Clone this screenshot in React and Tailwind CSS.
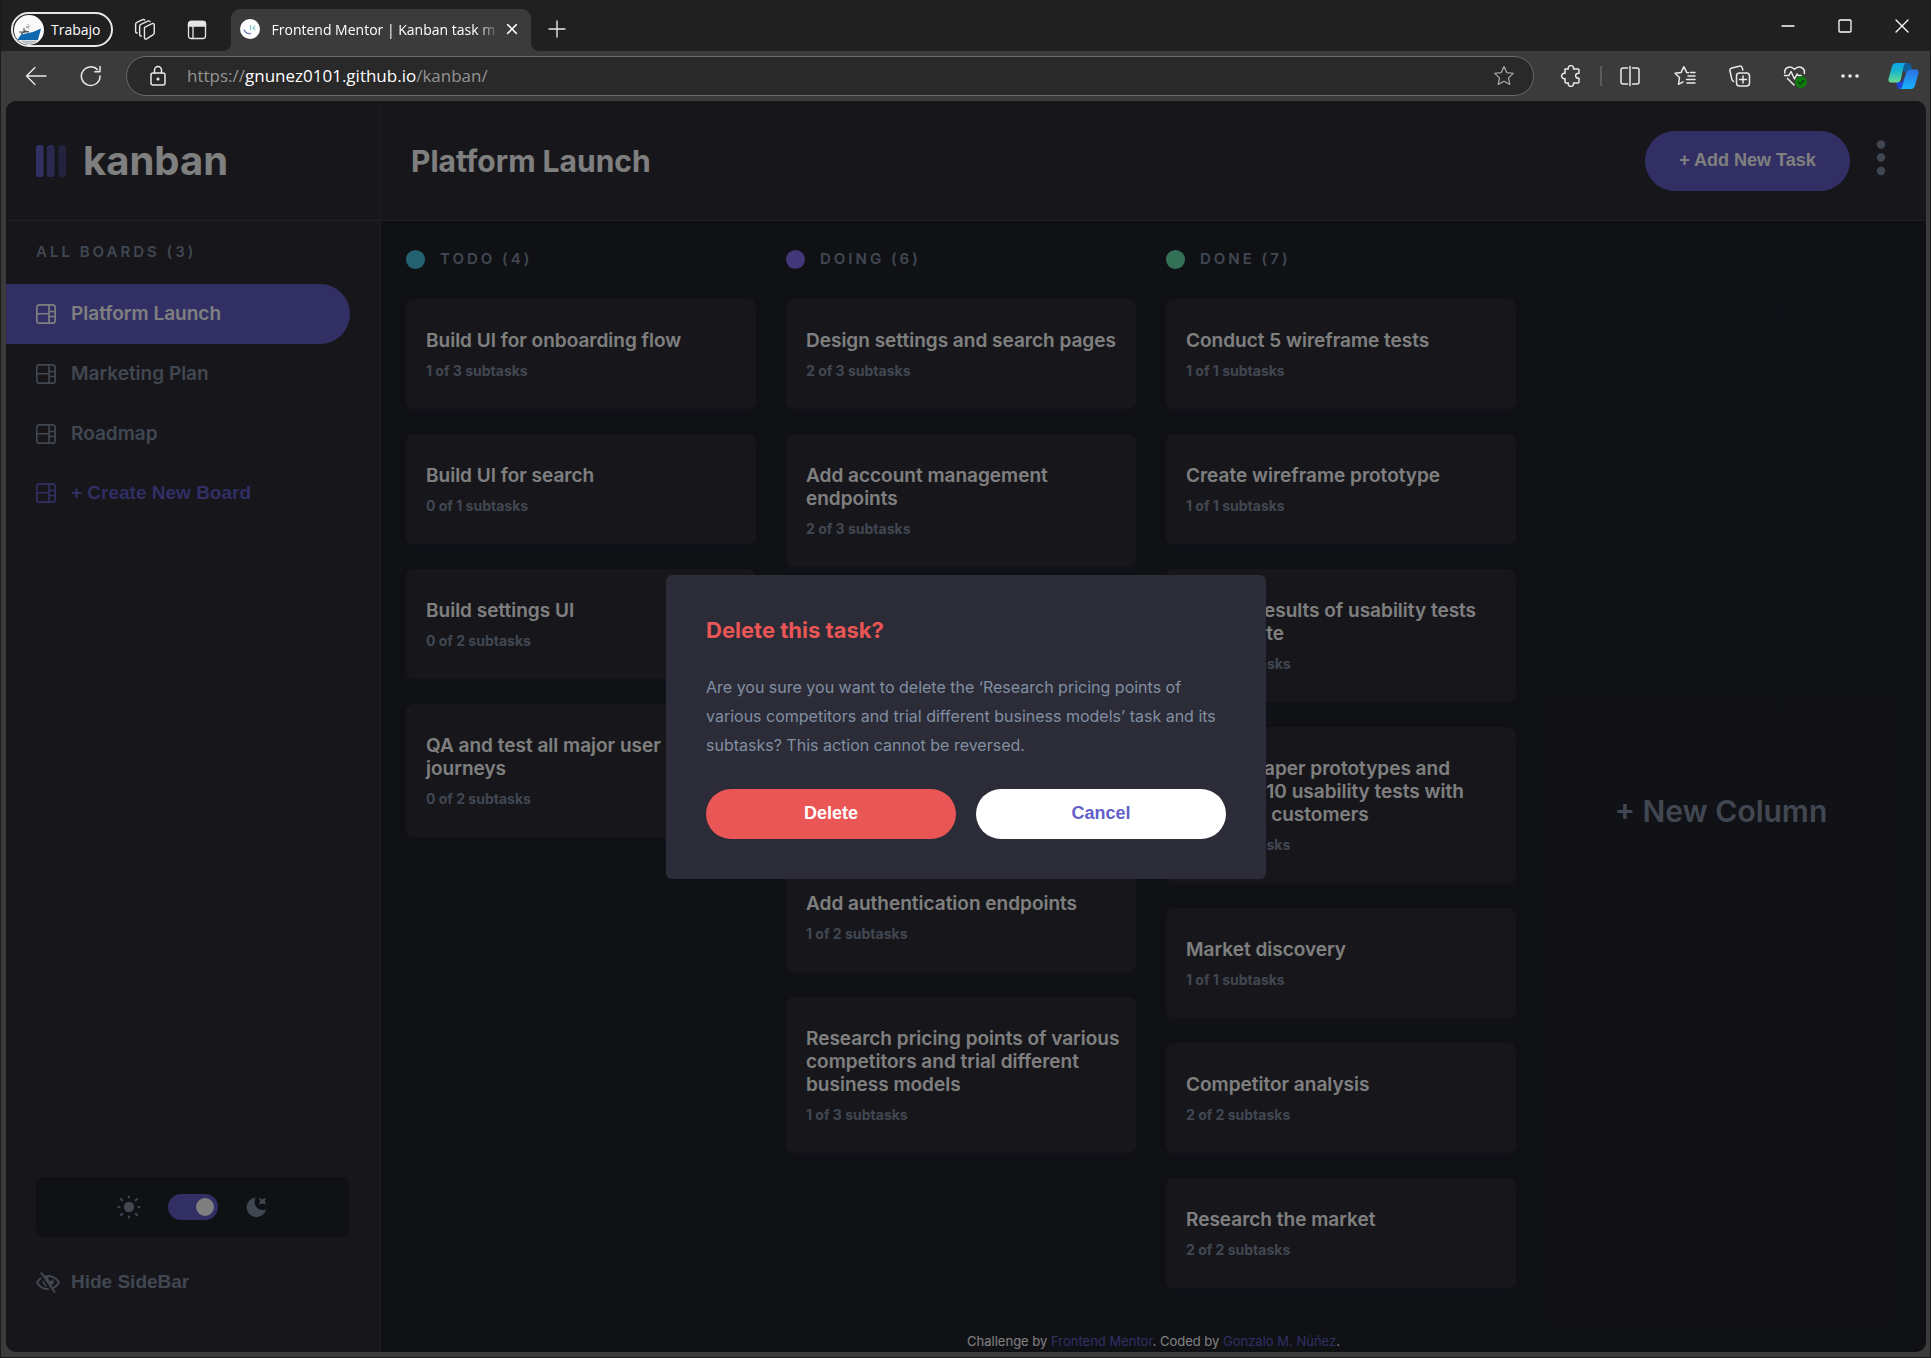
import React from "react";

const boards = ["Platform Launch", "Marketing Plan", "Roadmap"];

const columns = [
  {
    name: "TODO",
    dot: "bg-[#49c4e5]",
    tasks: [
      ["Build UI for onboarding flow", "1 of 3 subtasks"],
      ["Build UI for search", "0 of 1 subtasks"],
      ["Build settings UI", "0 of 2 subtasks"],
      ["QA and test all major user journeys", "0 of 2 subtasks"],
    ],
  },
  {
    name: "DOING",
    dot: "bg-[#8471f2]",
    tasks: [
      ["Design settings and search pages", "2 of 3 subtasks"],
      ["Add account management endpoints", "2 of 3 subtasks"],
      ["Design onboarding flow", "1 of 3 subtasks"],
      ["Add search endpoints", "1 of 2 subtasks"],
      ["Add authentication endpoints", "1 of 2 subtasks"],
      ["Research pricing points of various competitors and trial different business models", "1 of 3 subtasks"],
    ],
  },
  {
    name: "DONE",
    dot: "bg-[#67e2ae]",
    tasks: [
      ["Conduct 5 wireframe tests", "1 of 1 subtasks"],
      ["Create wireframe prototype", "1 of 1 subtasks"],
      ["Review results of usability tests and iterate", "3 of 3 subtasks"],
      ["Create paper prototypes and conduct 10 usability tests with potential customers", "2 of 2 subtasks"],
      ["Market discovery", "1 of 1 subtasks"],
      ["Competitor analysis", "2 of 2 subtasks"],
      ["Research the market", "2 of 2 subtasks"],
    ],
  },
];

function Line({ size = 22, w = 1.4, className = "", children }) {
  return (
    <svg
      width={size}
      height={size}
      viewBox="0 0 22 22"
      fill="none"
      stroke="currentColor"
      strokeWidth={w}
      strokeLinecap="round"
      strokeLinejoin="round"
      className={className}
      aria-hidden="true"
    >
      {children}
    </svg>
  );
}

function BoardIcon() {
  return (
    <svg width="20" height="20" viewBox="0 0 16 16" fill="currentColor" className="shrink-0" aria-hidden="true">
      <path d="M0 2.889A2.889 2.889 0 0 1 2.889 0H13.11A2.889 2.889 0 0 1 16 2.889V13.11A2.888 2.888 0 0 1 13.111 16H2.89A2.889 2.889 0 0 1 0 13.111V2.89Zm1.333 5.555v4.667c0 .859.697 1.556 1.556 1.556h6.889V8.444H1.333Zm8.445-1.333V1.333h-6.89A1.556 1.556 0 0 0 1.334 2.89V7.11h8.445Zm1.333-1.778h3.556V2.89a1.556 1.556 0 0 0-1.556-1.556h-2v4Zm3.556 4v-2.666h-3.556v2.666h3.556Zm0 3.778v-2.444h-3.556v4h2c.859 0 1.556-.697 1.556-1.556Z" />
    </svg>
  );
}

const starPath = "M11 1.6l2.8 6 6.5.8-4.8 4.5 1.3 6.5L11 16.2l-5.8 3.2 1.3-6.5L1.7 8.4l6.5-.8z";

function TitleBar() {
  return (
    <div className="flex h-[51px] items-end bg-[#202020] pl-[10px]">
      <button className="mb-[4px] flex h-[35px] items-center gap-[7px] self-end rounded-full border-2 border-[#e8e8e8] pl-px pr-[10px] text-[14px] text-white">
        <svg width="30" height="30" viewBox="0 0 30 30" aria-hidden="true">
          <circle cx="15" cy="15" r="15" fill="#fafafa" />
          <path d="M4 24l3-4.500 12-2.500 8-3.500-3 11.500H4z" fill="#0f68b0" />
          <path d="M6 25.500h18a15 15 0 0 1-5 3 15 15 0 0 1-8 0 15 15 0 0 1-5-3z" fill="#b8c0c4" />
          <path d="M5 17h8M10 13v5M7 19l4-3 4 1M12 12h3" stroke="#555" strokeWidth="1.200" fill="none" />
          <path d="M12 11a3 3 0 0 1 3 3M13 9a5 5 0 0 1 3 3" stroke="#bbb" fill="none" />
        </svg>
        Trabajo
      </button>
      <button aria-label="Workspaces" className="ml-[6px] flex h-[43px] w-[52px] items-center justify-center text-[#e6e6e6]">
        <Line size={24} w={1.3}>
          <path d="M10.500 8.500l7-3.300c1-.4 2 .1 2 1.200v7.200c0 .8-.4 1.400-1 1.700l-6 3.900c-1 .5-2-.1-2-1.200z" />
          <path d="M7.600 16.500c-.9.100-1.500-.4-1.500-1.400V7.600c0-.8.4-1.500 1.100-1.800l6.500-3c.8-.3 1.500-.1 1.900.5" />
          <path d="M3.900 13.700c-.9.100-1.500-.4-1.500-1.400V5.900c0-.8.4-1.500 1.100-1.800l5.300-2.600c.8-.3 1.500-.1 1.900.3" />
        </Line>
      </button>
      <button aria-label="Tab actions" className="flex h-[43px] w-[52px] items-center justify-center text-[#e6e6e6]">
        <Line w={1.3}>
          <rect x="2.500" y="2.500" width="17" height="17" rx="2.500" />
          <path d="M2.500 5a2.500 2.500 0 0 1 2.500-2.500h12A2.500 2.500 0 0 1 19.500 5v2h-17z" fill="currentColor" />
          <path d="M7 7v12" />
        </Line>
      </button>
      <svg width="8" height="8" viewBox="0 0 8 8" className="shrink-0" aria-hidden="true">
        <path d="M0 8a8 8 0 0 0 8-8v8z" fill="#3b3b3b" />
      </svg>
      <div className="flex h-[42px] w-[300px] items-center rounded-t-[9px] bg-[#3b3b3b] pb-[2px] pl-[9px] pr-[6px]">
        <svg width="20" height="20" viewBox="0 0 20 20" className="shrink-0" aria-hidden="true">
          <circle cx="10" cy="10" r="10" fill="#fff" />
          <path d="M4 10.500c1 3 3.500 4.500 7 4" stroke="#6d7fc0" strokeWidth="1.300" fill="none" />
          <path d="M10.500 6v5M15 7l-2 2 2 2" stroke="#7cc6c9" strokeWidth="1.200" fill="none" />
        </svg>
        <span className="ml-[12px] flex-1 whitespace-nowrap text-[14px] text-white [mask-image:linear-gradient(to_right,black_205px,transparent_228px)]">
          Frontend Mentor | Kanban task m
        </span>
        <button aria-label="Close tab" className="flex size-[26px] shrink-0 items-center justify-center text-white">
          <Line size={16} w={2}>
            <path d="M5 5l12 12M17 5L5 17" />
          </Line>
        </button>
      </div>
      <svg width="8" height="8" viewBox="0 0 8 8" className="shrink-0" aria-hidden="true">
        <path d="M8 8a8 8 0 0 1-8-8v8z" fill="#3b3b3b" />
      </svg>
      <button aria-label="New tab" className="flex h-[44px] w-[36px] items-center justify-center text-[#e6e6e6]">
        <Line w={1.4}>
          <path d="M11 3v16M3 11h16" />
        </Line>
      </button>
      <div className="ml-auto flex self-start text-white">
        <button aria-label="Minimize" className="flex h-[51px] w-[57px] items-center justify-center">
          <Line w={1.3}>
            <path d="M5 11h12" />
          </Line>
        </button>
        <button aria-label="Maximize" className="flex h-[51px] w-[57px] items-center justify-center">
          <Line w={1.3}>
            <rect x="5" y="5" width="12" height="12" rx="1" />
          </Line>
        </button>
        <button aria-label="Close" className="flex h-[51px] w-[57px] items-center justify-center">
          <Line w={1.3}>
            <path d="M5 5l12 12M17 5L5 17" />
          </Line>
        </button>
      </div>
    </div>
  );
}

function ToolButton({ label, children }) {
  return (
    <button aria-label={label} className="flex h-[40px] w-[55px] shrink-0 items-center justify-center text-[#e9e9e9]">
      {children}
    </button>
  );
}

function ToolBar() {
  return (
    <div className="flex h-[50px] items-center bg-[#3b3b3b] pl-[7px]">
      <ToolButton label="Back">
        <Line w={1.4}>
          <path d="M21 11H1.500M10 2.500L1.500 11l8.500 8.500" />
        </Line>
      </ToolButton>
      <ToolButton label="Refresh">
        <Line w={1.5}>
          <path d="M20 11a9.300 9.300 0 1 1-2.500-6.200M20 1.500v5.200h-5.200" />
        </Line>
      </ToolButton>
      <div className="ml-[8px] flex h-[40px] flex-1 items-center rounded-full border border-[#6a6a6a] bg-[#292929] pl-[20px] pr-[18px] text-[17px]">
        <Line w={1.5} className="shrink-0 text-[#e9e9e9]">
          <rect x="4" y="8" width="14" height="12" rx="2" />
          <path d="M7.500 8V5a3.500 3.500 0 0 1 7 0v3" />
          <circle cx="11" cy="14" r=".8" fill="currentColor" />
        </Line>
        <p className="ml-[18px] flex-1 whitespace-nowrap text-[#949494]">
          https://<span className="text-white">gnunez0101.github.io</span>/kanban/
        </p>
        <button aria-label="Add to favorites" className="text-[#a3a3a3]">
          <Line w={1.3}>
            <path d={starPath} />
          </Line>
        </button>
      </div>
      <div className="ml-[9px] flex items-center">
        <ToolButton label="Extensions">
          <Line w={1.5}>
            <path d="M5 4h3.300a2.700 2.700 0 1 1 5.200 0H18a1 1 0 0 1 1 1v3.300c-4.500-.6-4.500 5.600 0 5V17a1 1 0 0 1-1 1h-4.500a2.700 2.700 0 1 1-5.200 0H6a1 1 0 0 1-1-1v-3.400a2.700 2.700 0 1 1 0-5.200z" />
          </Line>
        </ToolButton>
        <span className="ml-[2px] h-[20px] w-[2px] bg-[#5c5c5c]" />
        <ToolButton label="Split screen">
          <Line w={1.5}>
            <path d="M8.500 3H4a2 2 0 0 0-2 2v12a2 2 0 0 0 2 2h4.500M13.500 3H18a2 2 0 0 1 2 2v12a2 2 0 0 1-2 2h-4.500M11 1.500v19" />
          </Line>
        </ToolButton>
        <ToolButton label="Favorites">
          <Line w={1.5}>
            <path d="M14.500 7.700l-1.800-.3L9.800 1.700l-2.700 5.700-6 .8L5.500 12.500l-1 6.800 4.500-2.500M14 11h7M12.500 14.500H21M13 18h8M16.500 7.500H21" />
          </Line>
        </ToolButton>
        <ToolButton label="Collections">
          <Line w={1.5}>
            <rect x="7.500" y="8" width="13" height="13" rx="3" />
            <path d="M14 11v7M10.500 14.500h7M4.500 16.500c-1-.6-1.500-1.300-1.700-2.300L1 6c-.3-1.500.5-2.700 1.800-3l7.400-1.800c1.500-.3 2.700.5 3.100 1.800l.5 2" />
          </Line>
        </ToolButton>
        <ToolButton label="Browser essentials">
          <svg width="24" height="24" viewBox="0 0 24 24" fill="none" stroke="currentColor" strokeWidth="1.500" strokeLinecap="round" strokeLinejoin="round" aria-hidden="true">
            <path d="M1.800 9C1 4 7 .5 11.500 5.200 16 .5 22.500 4 21.300 9.500M1.500 11.500h4.500l2-4 3.500 7.500 2.500-5 1.200 1.500h3M4.500 14.500L11 21" />
            <circle cx="18" cy="18" r="6" fill="#0f7b0f" stroke="none" />
            <path d="M15.500 18.300l1.800 1.700 3.400-3.500" stroke="#0b3c0b" />
          </svg>
        </ToolButton>
        <ToolButton label="Settings and more">
          <Line>
            <g fill="currentColor" stroke="none">
              <circle cx="4" cy="11" r="1.800" />
              <circle cx="11" cy="11" r="1.800" />
              <circle cx="18" cy="11" r="1.800" />
            </g>
          </Line>
        </ToolButton>
        <button aria-label="Copilot" className="flex h-[40px] w-[53px] shrink-0 items-center justify-center">
          <svg width="31" height="28" viewBox="0 0 31 28" aria-hidden="true">
            <defs>
              <linearGradient id="cpA" x1="0" y1="0" x2="0" y2="1">
                <stop offset="0" stopColor="#0aa5e6" />
                <stop offset=".45" stopColor="#1bb9c9" />
                <stop offset="1" stopColor="#6fdc8c" />
              </linearGradient>
              <linearGradient id="cpB" x1="0" y1="0" x2="0" y2="1">
                <stop offset="0" stopColor="#2a6fe0" />
                <stop offset="1" stopColor="#17b4ff" />
              </linearGradient>
            </defs>
            <path d="M8 1h12c2 0 2.500 1 3 2.500L24.500 8H21c-2 0-3 1-3.500 3z" fill="#0c5f97" />
            <path d="M8 20h6l3-6-2 9c-.5 2-1 4-3.500 4S9.500 25 9 23.500z" fill="#1c48d8" />
            <path d="M8 1h10c-1.500.5-2 2-2.500 3.500L13 17c-.6 2-1.800 3.500-4 3.500H3c-2.300 0-3-1.800-2.400-4L4 4.500C4.700 2.300 5.800 1 8 1z" fill="url(#cpA)" />
            <path d="M22.500 7.500H28c2.300 0 3 1.800 2.400 4L27 23.500c-.7 2.200-1.800 3.500-4 3.500H12c1.500-.5 2-2 2.500-3.500L18 11c.6-2 2.200-3.500 4.500-3.500z" fill="url(#cpB)" />
          </svg>
        </button>
      </div>
    </div>
  );
}

function Sidebar() {
  return (
    <aside className="flex w-[375px] shrink-0 flex-col border-r border-[#3e3f4e] bg-[#2d2c37]">
      <div className="flex h-[120px] shrink-0 items-center border-b border-[#3e3f4e] pl-[30px]">
        <svg width="30" height="32" viewBox="0 0 30 32" fill="#635fc7" aria-hidden="true">
          <rect width="7.500" height="32" rx="2.500" />
          <rect x="11" width="7.500" height="32" rx="2.500" opacity=".75" />
          <rect x="22.500" width="7.500" height="32" rx="2.500" opacity=".5" />
        </svg>
        <span className="ml-[17px] text-[40px] font-bold leading-[50px] text-white">kanban</span>
      </div>
      <h2 className="mb-[22px] mt-[21px] pl-[30px] text-[15px] font-semibold leading-[20px] tracking-[3px] text-[#828fa3]">
        ALL BOARDS (3)
      </h2>
      <nav className="flex flex-col items-start pr-[30px]">
        {boards.map((name, i) => (
          <button
            key={name}
            className={
              "flex h-[60px] w-full items-center gap-[15px] rounded-r-full pl-[30px] text-[19px] font-semibold " +
              (i === 0 ? "bg-[#635fc7] text-white" : "text-[#828fa3]")
            }
          >
            <BoardIcon />
            {name}
          </button>
        ))}
        <button className="flex h-[58px] w-full items-center gap-[15px] pl-[30px] font-['Liberation_Sans',Arial,sans-serif] text-[19px] font-bold text-[#635fc7]">
          <BoardIcon />+ Create New Board
        </button>
      </nav>
      <div className="mx-[30px] mt-auto flex h-[60px] items-center justify-center rounded-[8px] bg-[#20222b] text-[#828fa3]">
        <svg width="24" height="24" viewBox="0 0 24 24" stroke="currentColor" strokeWidth="2" strokeLinecap="round" aria-hidden="true">
          <circle cx="12" cy="12" r="5.200" fill="currentColor" stroke="none" />
          <path d="M12 1.500v1M12 21.500v1M1.500 12h1M21.500 12h1M4 4l1.300 1.300M18.700 18.700L20 20M4 20l1.300-1.300M18.700 5.300L20 4" />
        </svg>
        <input
          type="checkbox"
          role="switch"
          defaultChecked
          aria-label="Dark theme"
          className="mx-[27px] flex h-[26px] w-[50px] appearance-none items-center justify-end rounded-full bg-[#635fc7] pr-[4px] before:size-[18px] before:rounded-full before:bg-white before:content-['']"
        />
        <svg width="24" height="24" viewBox="0 0 24 24" fill="currentColor" aria-hidden="true">
          <path d="M10.500 2.600C7.500 9.500 12.500 17 21 14.500A9.800 9.800 0 1 1 10.500 2.600z" />
          <path d="M14 3l3.500 1.200L21 3l-1.200 3.300L21 9.600l-3.500-1.200L14 9.600l1.200-3.300z" />
        </svg>
      </div>
      <button className="mb-[55px] ml-[30px] mt-[30px] flex h-[30px] items-center gap-[11px] font-['Liberation_Sans',Arial,sans-serif] text-[19px] font-bold text-[#828fa3]">
        <svg width="24" height="21" viewBox="0 0 18 16" fill="currentColor" aria-hidden="true">
          <path d="M8.522 11.223a4.252 4.252 0 0 1-3.654-5.220l3.654 5.220ZM9 12.250A8.685 8.685 0 0 1 1.500 8a8.612 8.612 0 0 1 2.760-2.864l-.860-1.230A10.112 10.112 0 0 0 .208 7.238a1.500 1.500 0 0 0 0 1.524A10.187 10.187 0 0 0 9 13.750c.414 0 .828-.025 1.239-.074l-1-1.430A8.880 8.880 0 0 1 9 12.250Zm8.792-3.488a10.140 10.140 0 0 1-4.486 4.046l1.504 2.148a.375.375 0 0 1-.092.523l-.648.453a.375.375 0 0 1-.523-.092L3.190 1.044A.375.375 0 0 1 3.282.520L3.930.068a.375.375 0 0 1 .523.092l1.735 2.479A10.308 10.308 0 0 1 9 2.250c3.746 0 7.031 2 8.792 4.988a1.500 1.500 0 0 1 0 1.524ZM16.500 8a8.674 8.674 0 0 0-6.755-4.219A1.750 1.750 0 1 0 12.750 5v-.001a4.250 4.250 0 0 1-1.154 5.366l.834 1.192A8.641 8.641 0 0 0 16.500 8Z" />
        </svg>
        Hide SideBar
      </button>
    </aside>
  );
}

function Column({ column }) {
  return (
    <section>
      <h2 className="mb-[30px] flex h-[19px] items-center gap-[15px] text-[15px] font-semibold tracking-[3px] text-[#828fa3]">
        <span className={"size-[19px] rounded-full " + column.dot} />
        {column.name} ({column.tasks.length})
      </h2>
      <ul className="flex flex-col gap-[25px]">
        {column.tasks.map(([title, sub]) => (
          <li key={title} className="rounded-[8px] bg-[#2d2c37] pb-[29px] pl-[20px] pr-[12px] pt-[30px] shadow-[0_4px_6px_rgba(54,78,126,0.1)]">
            <h3 className="text-[19px] font-semibold leading-[23px] text-white">{title}</h3>
            <p className="mt-[10px] text-[14px] font-bold leading-[18px] text-[#828fa3]">{sub}</p>
          </li>
        ))}
      </ul>
    </section>
  );
}

function DeleteDialog() {
  return (
    <div className="absolute inset-0 flex items-center justify-center bg-black/50">
      <div role="dialog" aria-labelledby="dlg-title" className="w-[600px] rounded-[6px] bg-[#2b2c37] p-[40px]">
        <h2 id="dlg-title" className="text-[22px] font-bold leading-[30px] text-[#ea5555]">
          Delete this task?
        </h2>
        <p className="mt-[28px] text-[16px] leading-[29px] text-[#828fa3]">
          Are you sure you want to delete the ‘Research pricing points of various competitors and trial different business
          models’ task and its subtasks? This action cannot be reversed.
        </p>
        <div className="mt-[29px] flex gap-[20px] font-['Liberation_Sans',Arial,sans-serif] text-[18px] font-bold">
          <button className="h-[50px] flex-1 rounded-full bg-[#ea5555] text-white">Delete</button>
          <button className="h-[50px] flex-1 rounded-full bg-white text-[#635fc7]">Cancel</button>
        </div>
      </div>
    </div>
  );
}

export default function App() {
  return (
    <div className="flex min-h-screen flex-col border-x border-b border-[#1b1b1e] bg-[#3b3b3b] font-['Open_Sans','Noto_Sans',sans-serif]">
      <TitleBar />
      <ToolBar />
      <div className="relative mb-[5px] ml-[5px] mr-[4px] flex flex-1 overflow-hidden rounded-[10px] bg-[#20222b] font-['Inter',sans-serif]">
        <Sidebar />
        <div className="flex min-w-0 flex-1 flex-col">
          <header className="flex h-[120px] shrink-0 items-center border-b border-[#3e3f4e] bg-[#2d2c37] pl-[30px] pr-[40px]">
            <h1 className="flex-1 text-[30px] font-bold leading-[40px] text-white">Platform Launch</h1>
            <button className="h-[60px] w-[205px] rounded-full bg-[#635fc7] font-['Liberation_Sans',Arial,sans-serif] text-[18px] font-bold text-white">
              + Add New Task
            </button>
            <button aria-label="Board options" className="mb-[6px] ml-[26px]">
              <svg width="10" height="36" viewBox="0 0 10 36" fill="#828fa3" aria-hidden="true">
                <circle cx="5" cy="4.500" r="4.200" />
                <circle cx="5" cy="17.500" r="4.200" />
                <circle cx="5" cy="31" r="4.200" />
              </svg>
            </button>
          </header>
          <main className="grid flex-1 grid-cols-4 gap-[30px] pl-[25px] pr-[30px] pt-[29px]">
            {columns.map((c) => (
              <Column key={c.name} column={c} />
            ))}
            <button className="mt-[49px] rounded-[6px] bg-linear-to-b from-[#2b2c37]/25 to-[#2b2c37]/12 text-[30px] font-semibold text-[#828fa3]">
              + New Column
            </button>
          </main>
          <footer className="pb-px pt-[8px] text-center text-[13px] leading-[20px] text-white">
            Challenge by{" "}
            <a href="#mentor" className="text-[#635fc7]">
              Frontend Mentor
            </a>
            . Coded by{" "}
            <a href="#author" className="text-[#635fc7]">
              Gonzalo M. Núñez
            </a>
            .
          </footer>
        </div>
        <DeleteDialog />
      </div>
    </div>
  );
}
